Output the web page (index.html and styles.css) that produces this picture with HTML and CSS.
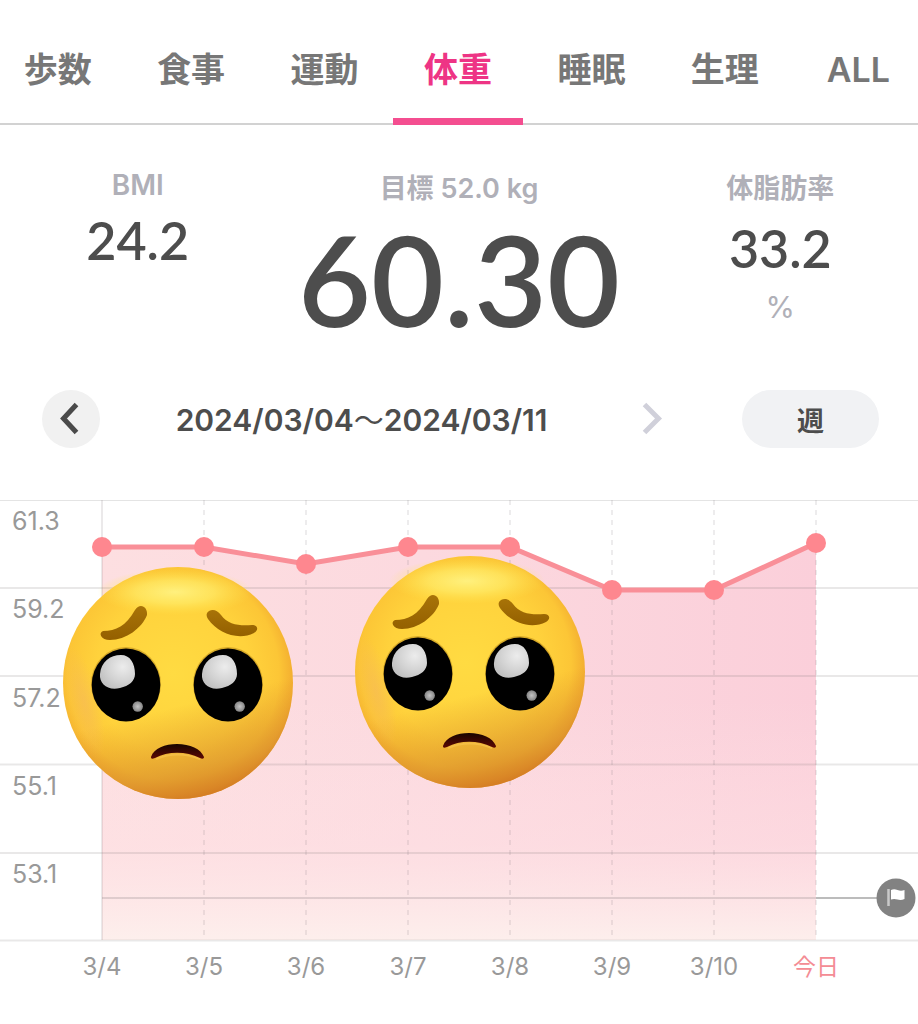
FILE: index.html
```html
<!DOCTYPE html>
<html lang="ja">
<head>
<meta charset="utf-8">
<meta name="viewport" content="width=device-width, initial-scale=1">
<title>体重</title>
<link rel="stylesheet" href="styles.css">
</head>
<body>
<nav class="tabs">
  <button class="tab">歩数</button>
  <button class="tab">食事</button>
  <button class="tab">運動</button>
  <button class="tab tab-active" aria-current="page">体重</button>
  <button class="tab">睡眠</button>
  <button class="tab">生理</button>
  <button class="tab">ALL</button>
</nav>
<main>
  <section class="stats">
    <div class="stat">
      <div class="label label-latin">BMI</div>
      <div class="value">24.2</div>
    </div>
    <div class="stat">
      <div class="label">目標 52.0 kg</div>
      <div class="value value-main">60.30</div>
    </div>
    <div class="stat">
      <div class="label">体脂肪率</div>
      <div class="value">33.2</div>
      <div class="unit">%</div>
    </div>
  </section>

  <section class="range">
    <button class="step step-prev" aria-label="前の週">
      <svg class="chevron" viewBox="0 0 58 58"><path d="M34.5 14.5 21.5 28.5 34.5 42.5"/></svg>
    </button>
    <div class="dates">2024/03/04<span class="tilde">～</span>2024/03/11</div>
    <button class="step step-next" aria-label="次の週">
      <svg class="chevron" viewBox="0 0 58 58"><path d="M21.5 14.5 35.5 28.5 21.5 42.5"/></svg>
    </button>
    <button class="period">週</button>
  </section>

  <svg class="chart" viewBox="0 0 918 500" role="img" aria-label="体重グラフ">
    <defs>
      <linearGradient id="areaTint" x1="0" x2="1" y1="0" y2="0">
        <stop offset="0" stop-color="#fddfe1"/>
        <stop offset="0.45" stop-color="#fcd9df"/>
        <stop offset="1" stop-color="#fbcfda"/>
      </linearGradient>
      <linearGradient id="areaFade" gradientUnits="userSpaceOnUse" x1="0" x2="0" y1="200" y2="441">
        <stop offset="0" stop-color="#fee4e6" stop-opacity="0"/>
        <stop offset="0.6" stop-color="#fee2e5" stop-opacity="0.5"/>
        <stop offset="1" stop-color="#fdf0ed" stop-opacity="0.95"/>
      </linearGradient>
      <radialGradient id="skin" cx="0.48" cy="0.46" r="0.56">
        <stop offset="0" stop-color="#ffdb42"/>
        <stop offset="0.6" stop-color="#ffd23c"/>
        <stop offset="0.82" stop-color="#fcc636"/>
        <stop offset="0.93" stop-color="#f3ae30"/>
        <stop offset="1" stop-color="#df8f28"/>
      </radialGradient>
      <linearGradient id="skinShade" x1="0.35" x2="0.6" y1="0" y2="1">
        <stop offset="0.6" stop-color="#d98a25" stop-opacity="0"/>
        <stop offset="0.86" stop-color="#d68b2c" stop-opacity="0.6"/>
        <stop offset="1" stop-color="#cf7320" stop-opacity="0.8"/>
      </linearGradient>
      <radialGradient id="skinShine">
        <stop offset="0" stop-color="#fff68a" stop-opacity="0.85"/>
        <stop offset="0.5" stop-color="#fff070" stop-opacity="0.6"/>
        <stop offset="1" stop-color="#ffe650" stop-opacity="0"/>
      </radialGradient>
      <radialGradient id="cheek">
        <stop offset="0" stop-color="#f3b365" stop-opacity="0.45"/>
        <stop offset="1" stop-color="#f3b365" stop-opacity="0"/>
      </radialGradient>
      <linearGradient id="brow" x1="0" x2="0" y1="0" y2="1">
        <stop offset="0" stop-color="#a87308"/>
        <stop offset="1" stop-color="#946000"/>
      </linearGradient>
      <radialGradient id="glint" cx="0.65" cy="0.35" r="0.7">
        <stop offset="0" stop-color="#ececec"/>
        <stop offset="0.6" stop-color="#d4d4d4"/>
        <stop offset="1" stop-color="#c2c2c2"/>
      </radialGradient>
      <radialGradient id="spark">
        <stop offset="0" stop-color="#c4c4c4"/>
        <stop offset="1" stop-color="#858585"/>
      </radialGradient>
      <linearGradient id="lip" x1="0" x2="0" y1="0" y2="1">
        <stop offset="0" stop-color="#170500"/>
        <stop offset="1" stop-color="#5c0803"/>
      </linearGradient>
      <g id="eye">
        <ellipse cx="0" cy="-1" rx="35" ry="37" fill="#8a5900" opacity="0.35"/>
        <ellipse rx="34.300" ry="36.500" fill="#000"/>
        <path fill="url(#glint)" d="M-26-11C-25-23-16-30-5-30C4-30 9-22 9-11C9-4 3 1-6 3C-18 6-27-1-26-11Z"/>
        <circle cx="11.700" cy="21.500" r="5.200" fill="url(#spark)"/>
      </g>
      <g id="face">
        <ellipse cx="128" cy="153" rx="115" ry="116" fill="url(#skin)"/>
        <ellipse cx="128" cy="153" rx="115" ry="116" fill="url(#skinShade)"/>
        <ellipse cx="125" cy="62" rx="78" ry="23" fill="url(#skinShine)"/>
        <ellipse cx="34" cy="172" rx="16" ry="58" fill="url(#cheek)" transform="rotate(-14 34 172)"/>
        <g fill="url(#brow)">
          <path d="M53 101C66 101 76 96 85 80C90 72 98 77 97 85C92 98 76 110 60 110C51 110 48 103 53 101Z"/>
          <path d="M159 81C163 79 167 80 171 85C178 95 190 96 202 95C208 95 209 100 204 103C188 111 168 103 158 89C156 86 156 83 159 81Z"/>
        </g>
        <use href="#eye" x="76" y="155"/>
        <use href="#eye" x="178" y="155"/>
        <path fill="none" stroke="#f4bd45" stroke-width="2" d="M106 229Q128 220 150 229"/>
        <path fill="url(#lip)" d="M101 227C104 218 115 214 127 214C140 214 151 219 154 227C154 229 152 229 150 228C136 221 118 221 105 228C102 229 101 229 101 227Z"/>
      </g>
    </defs>

    <path fill="url(#areaTint)" d="M102 47H204L306 64 408 47H510L612 90H714L816 43V440H102Z"/>
    <path fill="url(#areaFade)" d="M102 47H204L306 64 408 47H510L612 90H714L816 43V440H102Z"/>

    <path class="grid-edge" d="M0 .5H918"/>
    <path class="grid-line" d="M0 88H918M0 176H918M0 264.500H918M0 353H918M0 440.500H918"/>
    <path class="axis" d="M102 0V440"/>
    <path class="grid-dash" d="M204 0V440M306 0V440M408 0V440M510 0V440M612 0V440M714 0V440M816 0V440"/>
    <path class="goal" d="M102 398H816"/>
    <path class="goal goal-out" d="M816 398H878"/>

    <path class="trend" d="M102 47H204L306 64 408 47H510L612 90H714L816 43"/>
    <g class="dots">
      <circle cx="102" cy="47" r="10"/><circle cx="204" cy="47" r="10"/>
      <circle cx="306" cy="64" r="10"/><circle cx="408" cy="47" r="10"/>
      <circle cx="510" cy="47" r="10"/><circle cx="612" cy="90" r="10"/>
      <circle cx="714" cy="90" r="10"/><circle cx="816" cy="43" r="10"/>
    </g>

    <circle cx="896" cy="398" r="19.500" fill="#828282"/>
    <path d="M888.500 389V406" stroke="#c9c9c9" stroke-width="2.500"/>
    <path fill="#fff" d="M891 390Q894 388.500 897.500 390T904.500 390V399Q901 400.500 897.500 399.500T891 399.500Z"/>

    <g class="tick">
      <text x="12" y="30">61.3</text>
      <text x="12" y="118">59.2</text>
      <text x="12" y="207">57.2</text>
      <text x="12" y="295">55.1</text>
      <text x="12" y="383">53.1</text>
    </g>
    <g class="tick tick-x">
      <text x="102" y="475">3/4</text>
      <text x="204" y="475">3/5</text>
      <text x="306" y="475">3/6</text>
      <text x="408" y="475">3/7</text>
      <text x="510" y="475">3/8</text>
      <text x="612" y="475">3/9</text>
      <text x="714" y="475">3/10</text>
      <text x="816" y="475" class="today">今日</text>
    </g>

    <use href="#face" x="50" y="30"/>
    <use href="#face" x="342" y="19"/>
  </svg>
</main>
</body>
</html>
```
FILE: styles.css
```css
* {
  box-sizing: border-box;
}

body {
  margin: 0;
  overflow-x: hidden;
  background: #fff;
  color: #4d4d4d;
  font-family: Inter, "Noto Sans CJK JP", sans-serif;
}

button {
  margin: 0;
  padding: 0;
  border: 0;
  background: none;
  color: inherit;
  font: inherit;
  cursor: pointer;
}

.tabs {
  display: grid;
  grid-template-columns: repeat(7, 1fr);
  margin: 0 -7px 0 -9px;
  background: linear-gradient(#d2d2d2, #d2d2d2) bottom / 100% 2px no-repeat;
}

.tab {
  margin: 0 2px;
  padding: 45px 0 23px;
  border-bottom: 7px solid transparent;
  color: #777;
  font-size: 34px;
  font-weight: 600;
  line-height: 50px;
}

.tab-active {
  border-bottom-color: #f44e90;
  color: #ee3485;
}

.stats {
  display: grid;
  grid-template-columns: 3fr 4fr 3fr;
  padding-top: 46px;
  text-align: center;
}

.label {
  color: #b0b0b8;
  font-size: 27px;
  font-weight: 600;
  line-height: 36px;
}

.label-latin {
  font-size: 28px;
  line-height: 28px;
}

.value {
  padding-bottom: 4px;
  font-family: Lato, sans-serif;
  font-size: 52px;
  font-weight: 600;
  line-height: 82px;
}

.value-main {
  font-size: 126px;
  line-height: 144px;
}

.unit {
  color: #b0b0b8;
  font-size: 30px;
  line-height: 28px;
}

.range {
  display: grid;
  grid-template-columns: 58px 1fr 58px 137px;
  column-gap: 61px;
  align-items: center;
  padding: 35px 39px 52px 42px;
}

.step {
  height: 58px;
  border-radius: 50%;
}

.step-prev {
  background: #f1f1f1;
  color: #4a4a4a;
}

.step-next {
  color: #d0d0da;
}

.chevron {
  display: block;
  fill: none;
  stroke: currentColor;
  stroke-width: 5;
}

.dates {
  font-size: 30px;
  font-weight: 600;
  line-height: 38px;
  text-align: center;
  white-space: nowrap;
}

.tilde {
  font-family: "Noto Sans CJK JP", sans-serif;
  font-weight: 400;
}

.period {
  height: 58px;
  border-radius: 29px;
  background: #f1f2f4;
  font-size: 27px;
  font-weight: 700;
}

.chart {
  display: block;
  width: 100%;
  height: auto;
}

.chart .grid-edge {
  stroke: #e4e4e4;
}

.chart .grid-line {
  stroke: rgba(120, 110, 115, 0.16);
  stroke-width: 2;
}

.chart .axis {
  stroke: rgba(120, 110, 115, 0.3);
}

.chart .grid-dash {
  stroke: rgba(120, 110, 115, 0.26);
  stroke-width: 1;
  stroke-dasharray: 5 5;
}

.chart .goal {
  stroke: rgba(120, 110, 115, 0.22);
  stroke-width: 2;
}

.chart .goal-out {
  stroke: #bcbcbc;
}

.chart .trend {
  fill: none;
  stroke: #f98f98;
  stroke-width: 5;
}

.dots {
  fill: #fe878f;
}

.tick {
  fill: #999;
  font-size: 25px;
}

.tick-x {
  font-size: 24px;
  text-anchor: middle;
}

.today {
  fill: #f48c94;
  font-size: 23px;
}
```
